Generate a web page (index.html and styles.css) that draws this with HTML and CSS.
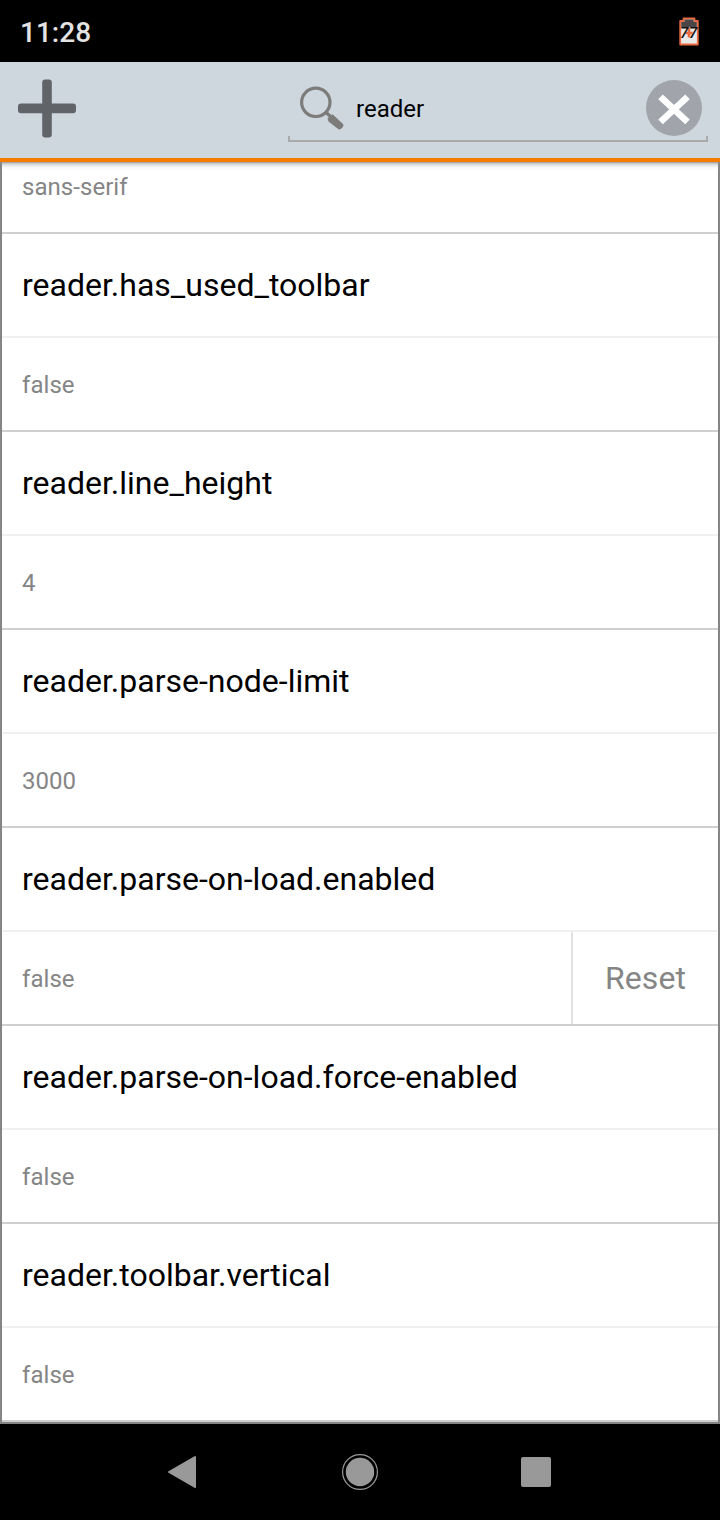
FILE: index.html
```html
<!DOCTYPE html>
<html lang="en">
<head>
<meta charset="utf-8">
<title>about:config</title>
<link rel="stylesheet" href="styles.css">
</head>
<body>
<header class="status">
  <span class="clock">11:28</span>
  <svg class="battery" width="22" height="30" viewBox="0 0 22 30">
    <path d="M2.2 5H5.5V2.5H16.5V5H19.8V28.5H2.2Z" fill="#e9e9e9" stroke="#ea6a42" stroke-width="1.8" stroke-linejoin="round"/>
    <path d="M3.2 6H6.4V3.5H15.6V6H18.8V11.5H3.2Z" fill="#494645"/>
    <path d="M11 12V21.5M7.5 17H14.5" stroke="#ea6a42" stroke-width="2.6"/>
    <text class="level" x="2" y="22">7</text>
    <text class="level" x="11" y="22">7</text>
  </svg>
</header>
<nav class="toolbar">
  <svg class="add" width="60" height="60" viewBox="0 0 60 60">
    <rect x="25.2" y="0.5" width="9.6" height="58" rx="3"/>
    <rect x="1" y="24.6" width="58" height="9.6" rx="3"/>
  </svg>
  <div class="search">
    <svg class="glass" width="48" height="48" viewBox="0 0 48 48">
      <circle cx="17.8" cy="18.3" r="14.2" fill="none" stroke="#7c7c7a" stroke-width="3.2"/>
      <path d="M27.5 28L33 33" stroke="#7c7c7a" stroke-width="3.5"/>
      <path d="M29.5 34.5L34.5 30.2L44.8 39.8Q46.4 41.5 44 44Q42 46.4 39.8 44.8L30.5 37.5Z" fill="#7c7c7a"/>
    </svg>
    <span class="query">reader</span>
    <svg class="clear" width="56" height="56" viewBox="0 0 56 56">
      <circle cx="28" cy="28" r="28" fill="#a1a5ab"/>
      <path d="M14.5 16.8L41.5 41.8M41.5 16.8L14.5 41.8" stroke="#fff" stroke-width="6.6"/>
    </svg>
  </div>
</nav>
<main class="prefs">
  <section><div class="value partial">sans-serif</div></section>
  <section><div class="name">reader.has_used_toolbar</div><div class="value">false</div></section>
  <section><div class="name">reader.line_height</div><div class="value">4</div></section>
  <section><div class="name">reader.parse-node-limit</div><div class="value">3000</div></section>
  <section><div class="name">reader.parse-on-load.enabled</div><div class="value">false<span class="reset">Reset</span></div></section>
  <section><div class="name">reader.parse-on-load.force-enabled</div><div class="value">false</div></section>
  <section><div class="name">reader.toolbar.vertical</div><div class="value">false</div></section>
</main>
<footer class="navbar">
  <svg width="40" height="40" viewBox="0 0 40 40"><path d="M7 20L33 5V35Z" fill="#999" stroke="#999" stroke-width="2" stroke-linejoin="round"/></svg>
  <svg width="40" height="40" viewBox="0 0 40 40"><circle cx="21" cy="20" r="17.4" fill="none" stroke="#999" stroke-width="1.2"/><circle cx="21" cy="20" r="14.2" fill="#999"/></svg>
  <svg width="40" height="40" viewBox="0 0 40 40"><rect x="5" y="5" width="30" height="30" rx="2" fill="#999"/></svg>
</footer>
</body>
</html>
```
FILE: styles.css
```css
* { box-sizing: border-box; }
body { margin: 0; width: 720px; height: 1520px; background: #000; font-family: Roboto, sans-serif; overflow: hidden; }
svg { display: block; flex: none; }
.status { height: 62px; display: flex; align-items: center; justify-content: space-between; padding: 2px 20px 0; background: #000; }
.clock { color: #e3e3e3; font-size: 28px; font-weight: 500; }
.battery { margin-bottom: 3px; }
.level { font: italic 500 15px Roboto, sans-serif; fill: #111; }
.toolbar { height: 100px; display: flex; justify-content: space-between; background: #ced6de; border-bottom: 4px solid #f57c00; padding: 17px 12px 0 17px; }
.add { fill: #606468; }
.search { width: 420px; height: 63px; display: flex; padding: 1px 6px 0 10px; background: linear-gradient(#aaa, #aaa) 0 100% / 100% 2px no-repeat, linear-gradient(#aaa, #aaa) 0 100% / 2px 6px no-repeat, linear-gradient(#aaa, #aaa) 100% 100% / 2px 6px no-repeat; }
.glass { margin-top: 4px; }
.query { flex: 1; margin-left: 10px; font-size: 24px; line-height: 58px; color: #000; }
.prefs { height: 1262px; border: solid #858585; border-width: 0 2px 2px; background: linear-gradient(#999 0, #d6d6d6 2px, #f5f5f5 5px, #fff 8px) #fff; }
.name { height: 104px; padding-left: 20px; border-bottom: 2px solid #f0f0f0; font-size: 32px; line-height: 102px; color: #000; }
.value { height: 94px; padding-left: 20px; border-bottom: 2px solid #cfcfcf; font-size: 24px; line-height: 94px; letter-spacing: 0.05px; color: #858585; display: flex; justify-content: space-between; }
.partial { height: 72px; line-height: 50px; }
.reset { width: 147px; border-left: 2px solid #e2e2e2; text-align: center; font-size: 32px; line-height: 92px; height: 92px; }
.navbar { height: 96px; display: flex; justify-content: space-between; align-items: center; padding: 0 164px 0 162px; background: #000; }
```
